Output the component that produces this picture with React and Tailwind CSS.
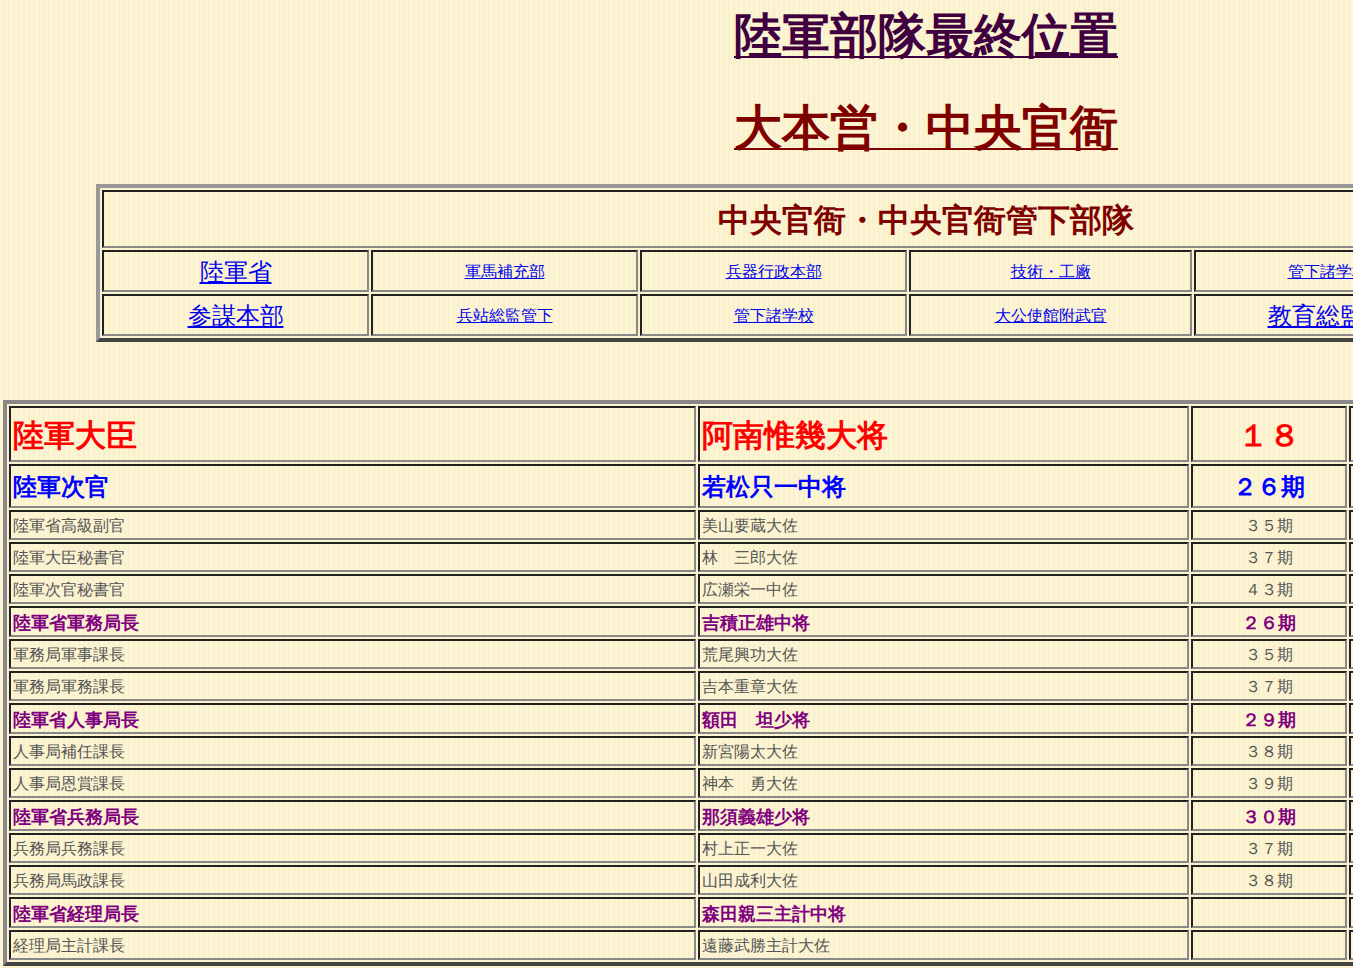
const links1 = ["陸軍省", "軍馬補充部", "兵器行政本部", "技術・工廠", "管下諸学校"];
const links2 = ["参謀本部", "兵站総監管下", "管下諸学校", "大公使館附武官", "教育総監部"];

const rows = [
  ["陸軍省高級副官", "美山要蔵大佐", "３５期", "g"],
  ["陸軍大臣秘書官", "林　三郎大佐", "３７期", "g"],
  ["陸軍次官秘書官", "広瀬栄一中佐", "４３期", "g"],
  ["陸軍省軍務局長", "吉積正雄中将", "２６期", "p"],
  ["軍務局軍事課長", "荒尾興功大佐", "３５期", "g"],
  ["軍務局軍務課長", "吉本重章大佐", "３７期", "g"],
  ["陸軍省人事局長", "額田　坦少将", "２９期", "p"],
  ["人事局補任課長", "新宮陽太大佐", "３８期", "g"],
  ["人事局恩賞課長", "神本　勇大佐", "３９期", "g"],
  ["陸軍省兵務局長", "那須義雄少将", "３０期", "p"],
  ["兵務局兵務課長", "村上正一大佐", "３７期", "g"],
  ["兵務局馬政課長", "山田成利大佐", "３８期", "g"],
  ["陸軍省経理局長", "森田親三主計中将", "", "p"],
  ["経理局主計課長", "遠藤武勝主計大佐", "", "g"],
];

const cell = "border-2 border-t-[#222] border-l-[#222] border-b-[#888] border-r-[#888] px-[2px] leading-none";

export default function App() {
  return (
    <div className="w-[1353px] h-[968px] overflow-hidden bg-[#fcf4d2] bg-[repeating-linear-gradient(90deg,#fcf4d2_0px,#fcf4d2_3px,#f5ecc6_4px,#fcf4d2_5px)] font-['Noto_Sans_CJK_JP',sans-serif]">
      <div className="w-[1852px]">
        <h1 className="text-center text-[48px] font-bold leading-none pt-[10px] text-[#400040] underline decoration-2 underline-offset-4">陸軍部隊最終位置</h1>
        <h2 className="text-center text-[48px] font-bold leading-none mt-[44px] text-[#800000] underline decoration-2 underline-offset-4">大本営・中央官衙</h2>
        <table className="mx-auto mt-[34px] w-[1660px] border-separate border-spacing-[2px] border-[4px] border-t-[#999] border-l-[#999] border-b-[#444] border-r-[#444]">
          <tbody>
            <tr>
              <td colSpan={6} className={cell + " h-[58px] text-center text-[32px] font-bold text-[#800000]"}>中央官衙・中央官衙管下部隊</td>
            </tr>
            {[links1, links2].map((l, ri) => (
              <tr key={ri}>
                {l.map((t, i) => (
                  <td key={i} className={cell + " h-[42px] text-center " + (i === 3 ? "w-[283px]" : "w-[267px]")}>
                    <a className={"text-[#0000ee] underline " + (i === 0 || (ri === 1 && i === 4) ? "text-[24px]" : "text-[16px]")}>{t}</a>
                  </td>
                ))}
                <td className={cell}></td>
              </tr>
            ))}
          </tbody>
        </table>
        <table className="ml-[3px] mt-[58px] w-[1846px] border-separate border-spacing-[2px] border-[4px] border-t-[#888] border-l-[#888] border-b-[#444] border-r-[#444]">
          <tbody>
            <tr className="h-[56px] text-[31px] font-bold text-[#ff0000]">
              <td className={cell + " w-[687px]"}>陸軍大臣</td>
              <td className={cell + " w-[491px]"}>阿南惟幾大将</td>
              <td className={cell + " w-[156px] text-center"}>１８</td>
              <td className={cell}></td>
            </tr>
            <tr className="h-[44px] text-[24px] font-bold text-[#0000ff]">
              <td className={cell}>陸軍次官</td>
              <td className={cell}>若松只一中将</td>
              <td className={cell + " text-center"}>２６期</td>
              <td className={cell}></td>
            </tr>
            {rows.map(([a, b, c, k], i) => (
              <tr key={i} className={k === "p" ? "h-[31px] text-[18px] font-bold text-[#800080]" : "h-[30px] text-[16px] text-[#555]"}>
                <td className={cell}>{a}</td>
                <td className={cell}>{b}</td>
                <td className={cell + " text-center"}>{c}</td>
                <td className={cell}></td>
              </tr>
            ))}
          </tbody>
        </table>
      </div>
    </div>
  );
}
